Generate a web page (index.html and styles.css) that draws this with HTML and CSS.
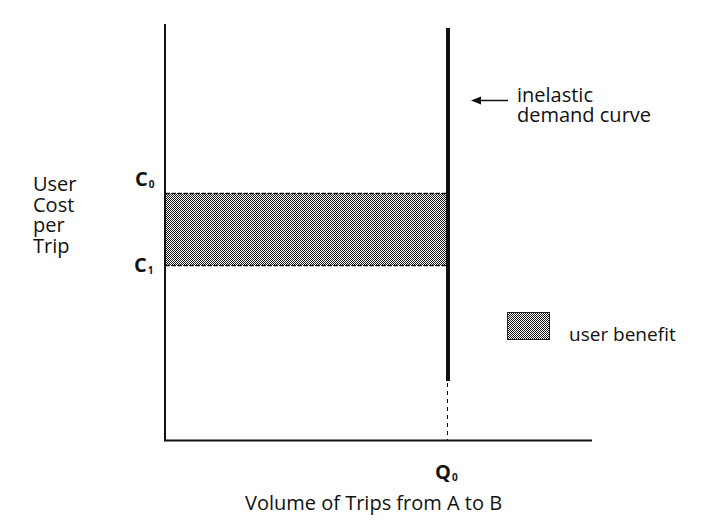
FILE: index.html
```html
<!DOCTYPE html>
<html lang="en">
<head>
<meta charset="utf-8">
<title>Inelastic demand – user benefit</title>
<link rel="stylesheet" href="styles.css">
</head>
<body>
<div class="page">
<svg class="chart" width="711" height="524" viewBox="0 0 711 524" xmlns="http://www.w3.org/2000/svg">
  <defs>
    <pattern id="dots" width="2" height="2" patternUnits="userSpaceOnUse">
      <rect width="2" height="2" fill="#fff"/>
      <rect x="0" y="0" width="1" height="1" fill="#1a1a1a"/>
      <rect x="1" y="1" width="1" height="1" fill="#1a1a1a"/>
    </pattern>
  </defs>

  <rect class="shade" x="166" y="193" width="280" height="73"/>
  <line class="dash" x1="166" y1="193.5" x2="446" y2="193.5"/>
  <line class="dash" x1="166" y1="265.5" x2="446" y2="265.5"/>

  <line class="axis" x1="165" y1="24" x2="165" y2="441"/>
  <line class="axis" x1="164" y1="440.5" x2="592" y2="440.5"/>

  <line class="demand" x1="448" y1="28" x2="448" y2="381"/>
  <line class="dash-v" x1="447.5" y1="383" x2="447.5" y2="440"/>

  <line class="arrow" x1="478" y1="100.5" x2="508" y2="100.5"/>
  <polygon class="head" points="471,100.5 481,96.5 481,104.5"/>

  <rect class="legend" x="507.5" y="312.5" width="42" height="27"/>
</svg>

<div class="label note">inelastic<br>demand curve</div>
<div class="label ytitle">User<br>Cost<br>per<br>Trip</div>
<div class="label sym c0">C<span class="sub">0</span></div>
<div class="label sym c1">C<span class="sub">1</span></div>
<div class="label sym q0">Q<span class="sub">0</span></div>
<div class="label legend-text">user benefit</div>
<div class="label xtitle">Volume of Trips from A to B</div>
</div>
</body>
</html>
```

FILE: styles.css
```css
html, body {
  margin: 0;
  padding: 0;
  background: #ffffff;
}

.page {
  position: relative;
  width: 711px;
  height: 524px;
  overflow: hidden;
}

.chart {
  display: block;
}

.shade {
  fill: url(#dots);
}

.dash {
  stroke: #111;
  stroke-width: 1.5;
  stroke-dasharray: 4 2;
}

.dash-v {
  stroke: #111;
  stroke-width: 1;
  stroke-dasharray: 4 4;
}

.axis {
  stroke: #111;
  stroke-width: 2;
}

.demand {
  stroke: #111;
  stroke-width: 4;
}

.arrow {
  stroke: #111;
  stroke-width: 1.5;
}

.head {
  fill: #111;
}

.legend {
  fill: url(#dots);
  stroke: #222;
  stroke-width: 1;
}

/* labels placed on the diagram canvas */
.label {
  position: absolute;
  font-family: "Open Sans", "Liberation Sans", sans-serif;
  font-size: 20px;
  line-height: 20px;
  color: #111;
  white-space: nowrap;
}

.note {
  left: 517px;
  top: 85px;
}

.ytitle {
  left: 33px;
  top: 174px;
  line-height: 20.5px;
}

.legend-text {
  left: 569px;
  top: 324px;
  font-size: 19px;
}

.xtitle {
  left: 245px;
  top: 493px;
}

.sym {
  font-weight: 700;
}

.c0 {
  left: 135px;
  top: 169px;
}

.c1 {
  left: 134px;
  top: 255px;
}

.q0 {
  left: 435px;
  top: 462px;
}

.sub {
  font-size: 10px;
  line-height: 1;
  vertical-align: -2px;
  margin-left: 1px;
}
```
